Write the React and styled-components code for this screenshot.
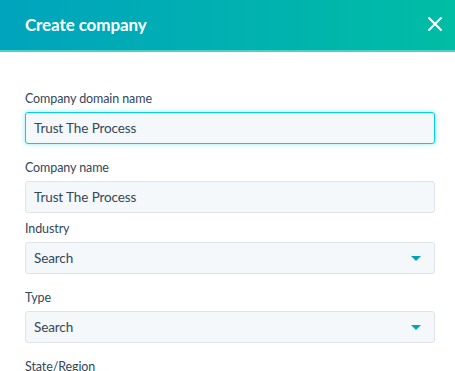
import React from "react";
import styled, { createGlobalStyle } from "styled-components";

const GlobalStyle = createGlobalStyle`
  html, body {
    margin: 0;
    padding: 0;
    background: #ffffff;
    font-family: Lato, "Noto Sans", sans-serif;
    color: #33475b;
    overflow: hidden;
  }
`;

const Panel = styled.div`
  width: 455px;
  height: 371px;
  display: flex;
  flex-direction: column;
  overflow: hidden;
`;

const Header = styled.div`
  height: 50px;
  flex-shrink: 0;
  display: flex;
  align-items: center;
  justify-content: space-between;
  padding: 0 8px 0 25px;
  background: linear-gradient(90deg, #00a4bd 0%, #00bda5 100%);
  border-bottom: 2px solid #4fd0c4;
`;

const Title = styled.h1`
  margin: 0;
  padding-bottom: 2px;
  font-size: 17px;
  font-weight: 700;
  color: #ffffff;
  letter-spacing: -0.1px;
`;

const CloseButton = styled.button`
  width: 24px;
  height: 24px;
  padding: 0;
  border: none;
  background: none;
  display: flex;
  align-items: center;
  justify-content: center;
  cursor: pointer;
  margin-bottom: 2px;
`;

const Body = styled.div`
  padding: 38px 20px 0 25px;
  display: flex;
  flex-direction: column;
`;

const Field = styled.div`
  display: flex;
  flex-direction: column;
  gap: 4px;
  margin-bottom: ${(p) => (p.$tight ? "7px" : "15px")};
`;

const Label = styled.label`
  font-size: 12.5px;
  line-height: 18px;
  letter-spacing: -0.1px;
  color: #33475b;
`;

const Box = styled.div`
  height: 32px;
  box-sizing: border-box;
  display: flex;
  align-items: center;
  justify-content: space-between;
  padding: 0 13px 0 8px;
  background: #f5f8fa;
  border-radius: 3px;
  border: 1px solid ${(p) => (p.$focused ? "#00d0e4" : "#dfe3eb")};
  box-shadow: ${(p) => (p.$focused ? "0 0 4px 1px rgba(0, 208, 228, 0.3)" : "none")};
  font-size: 13.5px;
  letter-spacing: -0.1px;
  color: #33475b;
`;

const Caret = styled.span`
  width: 0;
  height: 0;
  border-left: 5px solid transparent;
  border-right: 5px solid transparent;
  border-top: 5px solid #00a4bd;
`;

const fields = [
  { label: "Company domain name", value: "Trust The Process", focused: true },
  { label: "Company name", value: "Trust The Process", tight: true },
  { label: "Industry", value: "Search", select: true },
  { label: "Type", value: "Search", select: true },
  { label: "State/Region", value: "" },
];

export default function App() {
  return (
    <Panel>
      <GlobalStyle />
      <Header>
        <Title>Create company</Title>
        <CloseButton aria-label="Close">
          <svg width="14" height="14" viewBox="0 0 14 14">
            <path d="M1 1 L13 13 M13 1 L1 13" stroke="#ffffff" strokeWidth="2" strokeLinecap="round" />
          </svg>
        </CloseButton>
      </Header>
      <Body>
        {fields.map((f) => (
          <Field key={f.label} $tight={f.tight}>
            <Label>{f.label}</Label>
            <Box $focused={f.focused}>
              <span>{f.value}</span>
              {f.select && <Caret />}
            </Box>
          </Field>
        ))}
      </Body>
    </Panel>
  );
}
